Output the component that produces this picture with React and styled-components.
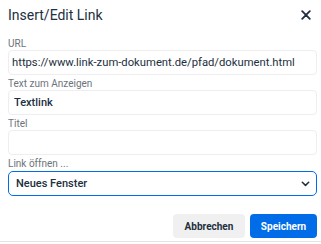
import React from 'react'
import styled, { createGlobalStyle } from 'styled-components'

const Global = createGlobalStyle`
    html, body {
        margin: 0;
        padding: 0;
        background: #fff;
    }
    body {
        font-family: Roboto, "Liberation Sans", sans-serif;
        color: #222f3e;
    }
`

export default function App() {
    return (
        <>
            <Global />
            <Dialog>
                <Header>
                    <Title>Insert/Edit Link</Title>
                    <Close aria-label="Schließen">
                        <svg width="10" height="10" viewBox="0 0 10 10">
                            <path d="M1.2 1.2 L8.8 8.8 M8.8 1.2 L1.2 8.8" stroke="#222f3e" strokeWidth="1.8" strokeLinecap="round" />
                        </svg>
                    </Close>
                </Header>
                <Body>
                    <Field>
                        <Label>URL</Label>
                        <Input $pad={3} defaultValue="https://www.link-zum-dokument.de/pfad/dokument.html" />
                    </Field>
                    <Field>
                        <Label>Text zum Anzeigen</Label>
                        <Input $strong $pad={5} defaultValue="Textlink" />
                    </Field>
                    <Field>
                        <Label>Titel</Label>
                        <Input defaultValue="" />
                    </Field>
                    <Field>
                        <Label>Link öffnen ...</Label>
                        <Select>
                            <SelectText>Neues Fenster</SelectText>
                            <svg width="9" height="6" viewBox="0 0 9 6">
                                <path d="M1.3 1.3 L4.5 4.4 L7.7 1.3" fill="none" stroke="#222f3e" strokeWidth="1.5" strokeLinecap="round" strokeLinejoin="round" />
                            </svg>
                        </Select>
                    </Field>
                </Body>
                <Footer>
                    <Button $w={72}>Abbrechen</Button>
                    <Button $primary $w={67}>Speichern</Button>
                </Footer>
            </Dialog>
        </>
    )
}

const Dialog = styled.div`
    width: 321px;
    height: 242px;
    border-bottom: 1px solid #e3e3e3;
    display: flex;
    flex-direction: column;
    box-sizing: border-box;
`

const Header = styled.div`
    display: flex;
    align-items: flex-start;
    justify-content: space-between;
    height: 35px;
    padding: 0 10px 0 8px;
    box-sizing: border-box;
`

const Title = styled.h1`
    margin: 0;
    font-size: 14px;
    font-weight: 400;
    line-height: 30px;
    color: #222f3e;
`

const Close = styled.button`
    border: none;
    background: none;
    padding: 0;
    margin-top: 10px;
    display: flex;
    align-items: center;
    justify-content: center;
    width: 10px;
    height: 10px;
    cursor: pointer;
`

const Body = styled.div`
    display: flex;
    flex-direction: column;
    padding: 0 4px 0 8px;
`

const Field = styled.div`
    display: flex;
    flex-direction: column;
`

const Label = styled.label`
    font-size: 10px;
    line-height: 12px;
    padding-top: 3px;
    color: #6d737b;
`

const Input = styled.input`
    box-sizing: border-box;
    height: 25px;
    width: 100%;
    border: 1px solid #eeeeee;
    border-radius: 4px;
    padding: 0 ${p => p.$pad || 2}px;
    font-family: Roboto, "Liberation Sans", sans-serif;
    font-size: ${p => (p.$strong ? 11 : 11.25)}px;
    font-weight: ${p => (p.$strong ? 500 : 400)};
    color: #222f3e;
    outline: none;
`

const Select = styled.div`
    box-sizing: border-box;
    height: 25px;
    display: flex;
    align-items: center;
    justify-content: space-between;
    border: 1px solid #006ce7;
    border-radius: 5px;
    padding: 0 6px 0 7px;
    margin-top: 1px;
`

const SelectText = styled.span`
    font-size: 11px;
    font-weight: 500;
    color: #222f3e;
`

const Footer = styled.div`
    display: flex;
    justify-content: flex-end;
    gap: 5px;
    padding: 18px 4px 0 0;
`

const Button = styled.button`
    height: 24px;
    width: ${p => p.$w}px;
    border: none;
    border-radius: 4px;
    padding: 0;
    font-family: Roboto, "Liberation Sans", sans-serif;
    font-size: 10px;
    font-weight: 700;
    background: ${p => (p.$primary ? '#006ce7' : '#f0f0f0')};
    color: ${p => (p.$primary ? '#fff' : '#222f3e')};
    cursor: pointer;
`
